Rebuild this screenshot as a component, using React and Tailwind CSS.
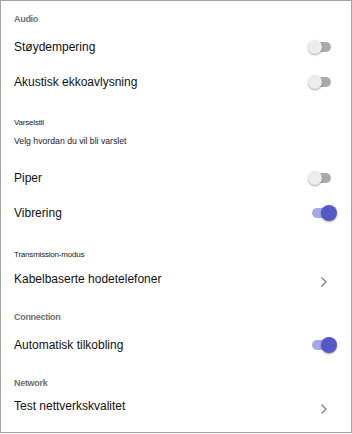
import React from "react";

function Toggle({ on }) {
  if (on) {
    return (
      <div className="relative w-[25px] h-[16px] mr-[14px]">
        <div className="absolute left-0 top-[3px] w-[21px] h-[10px] rounded-full bg-[#a6a7e3]" />
        <div className="absolute left-[9px] top-0 w-[16px] h-[16px] rounded-full bg-[#5558c7] shadow-[0_1px_2px_rgba(0,0,0,0.35)]" />
      </div>
    );
  }
  return (
    <div className="relative w-[24px] h-[16px] mr-[19px]">
      <div className="absolute left-[2px] top-[3px] w-[21px] h-[10px] rounded-full bg-[#ababab]" />
      <div className="absolute left-0 top-[1px] w-[14px] h-[14px] rounded-full bg-[#ececec] shadow-[0_1px_2px_rgba(0,0,0,0.35)]" />
    </div>
  );
}

function Chevron() {
  return (
    <svg width="8" height="12" viewBox="0 0 8 12" className="mr-[23px] mt-[5px]">
      <path d="M1.5 1.5 L6 6 L1.5 10.5" fill="none" stroke="#7a7a7a" strokeWidth="1.2" />
    </svg>
  );
}

function Header({ children, mt }) {
  return (
    <div className={`flex items-center h-[20px] pl-[13px] text-[9px] tracking-[-0.3px] font-bold text-[#707070] ${mt}`}>
      {children}
    </div>
  );
}

function Row({ label, h, mt = "", right }) {
  return (
    <div className={`flex items-center justify-between pl-[13px] ${h} ${mt}`}>
      <span className="text-[12px] text-[#111]">{label}</span>
      {right}
    </div>
  );
}

export default function App() {
  return (
    <div
      className="w-[352px] h-[433px] border border-[#a3a3a3] bg-white overflow-hidden"
      style={{ fontFamily: '"Liberation Sans", Arial, sans-serif' }}
    >
      <Header mt="mt-[9px]">Audio</Header>
      <Row label="Støydempering" h="h-[34px]" right={<Toggle />} />
      <Row label="Akustisk ekkoavlysning" h="h-[36px]" right={<Toggle />} />
      <div className="flex items-center h-[20px] pl-[13px] mt-[13px] text-[8px] tracking-[-0.2px] text-[#222]">Varselstil</div>
      <div className="flex items-center h-[18px] pl-[13px] text-[8.7px] text-[#1a1a2e]">Velg hvordan du vil bli varslet</div>
      <Row label="Piper" h="h-[36px]" mt="mt-[9px]" right={<Toggle />} />
      <Row label="Vibrering" h="h-[34px]" right={<Toggle on />} />
      <div className="flex items-center h-[20px] pl-[13px] mt-[15px] text-[8px] tracking-[-0.2px] text-[#222]">Transmission-modus</div>
      <Row label="Kabelbaserte hodetelefoner" h="h-[28px]" right={<Chevron />} />
      <Header mt="mt-[15px]">Connection</Header>
      <Row label="Automatisk tilkobling" h="h-[30px]" mt="mt-[2px]" right={<Toggle on />} />
      <Header mt="mt-[14px]">Network</Header>
      <Row label="Test nettverkskvalitet" h="h-[24px]" right={<Chevron />} />
    </div>
  );
}
